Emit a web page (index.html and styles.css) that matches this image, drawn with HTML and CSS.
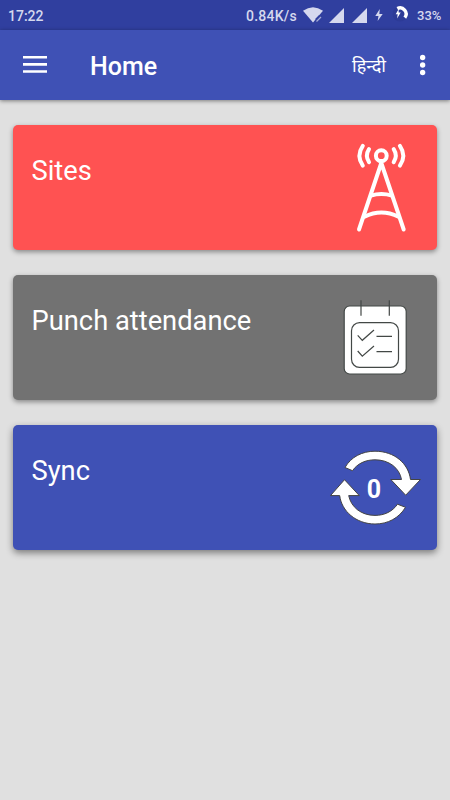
FILE: index.html
```html
<!DOCTYPE html>
<html lang="en">
<head>
<meta charset="utf-8">
<title>Home</title>
<link rel="stylesheet" href="styles.css">
</head>
<body>
<div class="status">
  <span class="time">17:22</span>
  <span class="speed">0.84K/s</span>
  <svg class="indicators" width="112" height="30" viewBox="300 0 112 30">
    <g fill="#d5d8ee">
      <path d="M303 10.800Q313 3.500 323 10.800L313 22.500Z"/>
      <path d="M344 8V23H329Z"/>
      <path d="M367 8V23H352Z"/>
      <path d="M379.800 9L375.300 16H378.500L377.600 21L382.700 14H379.300Z"/>
    </g>
    <path d="M316 20L320 16M318 22L322 18" stroke="#303f9f" stroke-width="2.500"/>
    <path d="M316.500 21.500L321 17" stroke="#a5acd7" stroke-width="1.300"/>
    <circle cx="400" cy="14" r="7.500" fill="#2d3b97"/>
    <path d="M397.300 8.600A6 6 0 0 1 404.800 17.600" fill="none" stroke="#fff" stroke-width="3.400"/>
    <path d="M398.700 9L395.700 14.200H397.700L397.100 18.500L400.700 12.500H398.600Z" fill="#fff"/>
  </svg>
  <span class="battery">33%</span>
</div>
<header class="toolbar">
  <svg class="menu" width="24" height="18" viewBox="0 0 24 18" fill="#fff">
    <path d="M0 0H24V2.600H0ZM0 7.100H24V9.700H0ZM0 14.200H24V16.800H0Z"/>
  </svg>
  <h1>Home</h1>
  <span class="lang" lang="hi">हिन्दी</span>
  <svg class="more" width="6" height="22" viewBox="0 0 6 22" fill="#fff">
    <circle cx="2.600" cy="3.500" r="2.700"/><circle cx="2.600" cy="11" r="2.700"/><circle cx="2.600" cy="18.500" r="2.700"/>
  </svg>
</header>
<main>
  <section class="card sites">
    <h2>Sites</h2>
    <svg width="107" height="125" viewBox="330 125 107 125" fill="none" stroke="#fff" stroke-width="4" stroke-linecap="round" stroke-linejoin="round">
      <circle cx="381.300" cy="155.700" r="5.400"/>
      <path d="M359 229.500L381.300 163L403.700 229.500"/>
      <path d="M371 195.600Q381.300 192.500 392 195.600M364.500 216.700Q381.300 208.500 398.500 216.700"/>
      <path d="M369 149.200Q364.800 155.700 369 162.200M393.700 149.200Q397.900 155.700 393.700 162.200M362.800 145.800Q356 155.700 362.800 165.600M399.900 145.800Q406.700 155.700 399.900 165.600"/>
    </svg>
  </section>
  <section class="card punch">
    <h2>Punch attendance</h2>
    <svg width="107" height="125" viewBox="330 275 107 125" fill="none" stroke="#434846" stroke-width="1.200">
      <rect x="344.200" y="306" width="62" height="68" rx="5.500" fill="#fff"/>
      <path d="M361 300.300V315.700M389.300 300.300V315.700"/>
      <rect x="351.500" y="322.700" width="47" height="44.600" rx="8"/>
      <path d="M357.700 335.300L362.300 340.300L374 330M376.500 336.300H392M357.700 351L362.300 356.200L374 346M376.500 351.600H392"/>
    </svg>
  </section>
  <section class="card sync">
    <h2>Sync</h2>
    <svg width="107" height="125" viewBox="330 425 107 125" fill="#fff" stroke="#444" stroke-width="1">
      <path d="M345 467.500C351 457 362 451.200 375 451.200C394.500 451.200 408.500 463.500 410.500 479.500H420.500L405.700 495.200L390.800 479.500H401.500C399.500 468 389 459.800 375 459.800C365.500 459.800 357.500 463.500 352.500 470.700Z"/>
      <path d="M405.500 507.300C399 518 388 524 375 524C356 524 341.500 511 339.700 495.600H330.500L344.500 479.700L359.300 495.600H348.700C351 507 361 515.400 375 515.400C384.500 515.400 392.500 511.500 397.500 504.200Z"/>
    </svg>
    <span class="count">0</span>
  </section>
</main>
</body>
</html>
```
FILE: styles.css
```css
* { box-sizing: border-box; }
body {
  margin: 0;
  height: 800px;
  overflow: hidden;
  background: #e0e0e0;
  color: #fff;
  font-family: Roboto, "Noto Sans", sans-serif;
}
svg { display: block; flex: none; }
.status {
  height: 30px;
  display: flex;
  align-items: center;
  padding: 1px 8px 0;
  background: #303f9f;
  color: #d5d8ee;
  font-size: 14px;
  font-weight: 500;
  white-space: nowrap;
}
.speed { margin-left: auto; width: 51px; margin-right: 3px; letter-spacing: 0.25px; }
.indicators { margin-top: -1px; }
.battery { width: 25px; margin-left: 5px; font-size: 13px; }
.toolbar {
  height: 70px;
  display: flex;
  align-items: center;
  padding: 0 24px 0 23px;
  background: #3f51b5;
  box-shadow: 0 1px 4px rgba(0, 0, 0, 0.45);
}
.toolbar h1 {
  margin: 4px auto 0 43px;
  font-size: 25px;
  font-weight: 500;
  line-height: 30px;
}
.lang { width: 34px; margin: 2px 34px 0 0; font-size: 18px; line-height: 24px; white-space: nowrap; }
main {
  display: flex;
  flex-direction: column;
  gap: 25px;
  padding: 25px 13px;
}
.card {
  position: relative;
  height: 125px;
  display: flex;
  justify-content: space-between;
  padding-left: 18.500px;
  border-radius: 5px;
  box-shadow: 0 2px 5px rgba(0, 0, 0, 0.4);
}
.card h2 {
  margin: 29px 0 0;
  font-size: 27.300px;
  font-weight: 400;
  line-height: 34px;
  white-space: nowrap;
}
.sites { background: #ff5252; }
.punch { background: #727272; }
.sync { background: #3f51b5; box-shadow: 0 3px 7px rgba(0, 0, 0, 0.45); }
.count {
  position: absolute;
  right: 48px;
  top: 50px;
  width: 30px;
  text-align: center;
  font-size: 25px;
  line-height: 30px;
  font-weight: 700;
}
```
